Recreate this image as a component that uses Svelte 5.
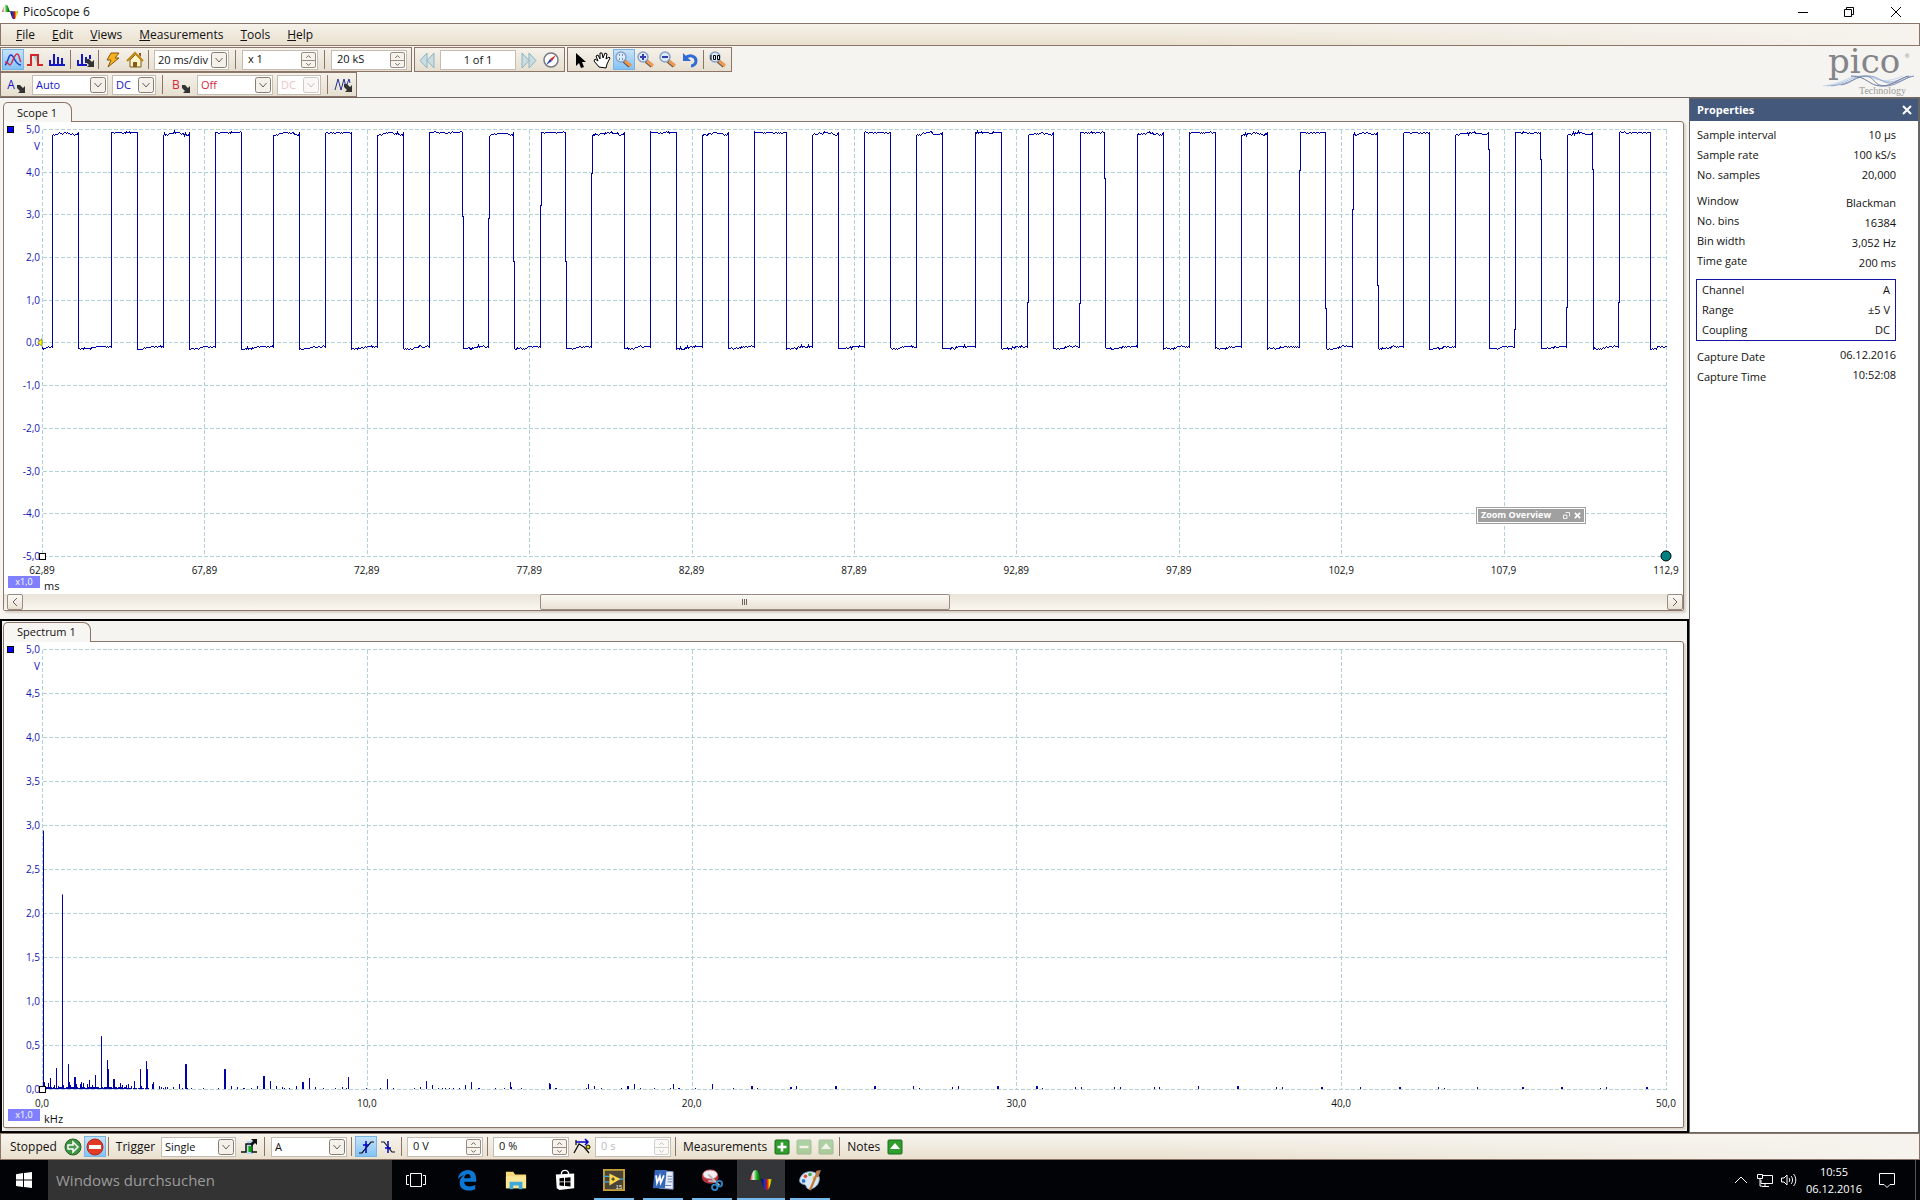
<script>
  const menus = ['File', 'Edit', 'Views', 'Measurements', 'Tools', 'Help'];

  const voltLabels = ['5,0', '4,0', '3,0', '2,0', '1,0', '0,0', '-1,0', '-2,0', '-3,0', '-4,0', '-5,0'];
  const timeLabels = ['62,89', '67,89', '72,89', '77,89', '82,89', '87,89', '92,89', '97,89', '102,9', '107,9', '112,9'];
  const levelLabels = ['5,0', '4,5', '4,0', '3,5', '3,0', '2,5', '2,0', '1,5', '1,0', '0,5', '0,0'];
  const freqLabels = ['0,0', '10,0', '20,0', '30,0', '40,0', '50,0'];

  // Alternating rising and falling edges of the square wave.
  const edges = [
    10, 36, 69, 95, 121, 147, 173, 199, 231, 257, 283, 309, 335, 361, 387, 420, 446, 471, 498, 523, 549, 582,
    608, 634, 660, 686, 712, 744, 770, 796, 822, 848, 874, 900, 933, 959, 985, 1011, 1037, 1062, 1095, 1121,
    1147, 1173, 1199, 1225, 1257, 1283, 1310, 1335, 1361, 1387, 1413, 1446, 1472, 1498, 1524, 1550, 1576, 1608
  ];
  // Height at which an edge steps over by one pixel.
  const kinks = { 15: 87, 16: 89, 17: 131, 18: 76, 19: 131, 20: 44, 36: 172, 38: 173, 39: 49, 46: 41, 47: 178, 48: 80, 49: 155, 53: 20, 54: 199, 55: 30, 56: 177, 57: 40, 58: 172 };

  let seed = 7;
  function rand() {
    seed = (seed * 16807) % 2147483647;
    return seed / 2147483647;
  }

  function level(from, to, high, shape) {
    const out = [];
    const base = high ? 3 : 216;
    for (let x = from; x < to; x += 1) {
      const t = (x - from) / Math.max(1, to - from);
      let drift = 0;
      if (high) drift = shape === 0 ? (t < 0.35 ? 3 - t * 8 : 0) : shape === 1 ? 0 : shape === 2 ? t * 3 : Math.abs(t - 0.5) * 5;
      else drift = t < 0.4 ? 2 : shape === 1 ? 0 : 1 - t;
      const r = rand();
      const n = r > 0.75 ? 1 : r < 0.08 ? -1 : 0;
      out.push(`${x} ${Math.round(base + drift + n)}`);
    }
    return out;
  }

  function wave() {
    let pts = [];
    let from = 0;
    let high = false;
    edges.forEach((x, i) => {
      pts = pts.concat(level(from, x, high, (i * 7) % 4));
      if (kinks[i]) {
        pts.push(`${x} ${high ? 3 : 217}`, `${x} ${kinks[i]}`, `${x + 1} ${kinks[i]}`);
        from = x + 1;
      } else {
        pts.push(`${x} ${high ? 3 : 217}`);
        from = x;
      }
      high = !high;
    });
    return 'M' + pts.concat(level(from, 1625, false, 1)).join('L');
  }
  const wavePath = wave();

  // Spectrum lines: position, height, width.
  const peaks = [
    [1, 259], [2, 7], [6, 6], [8, 11], [12, 4], [14, 21], [16, 3], [20, 195], [21, 4], [26, 25], [27, 7], [28, 4],
    [32, 12, 2], [34, 5], [38, 5], [39, 7], [41, 6], [45, 5], [47, 9], [50, 4], [53, 14], [59, 53], [65, 29], [66, 20],
    [71, 10, 2], [78, 6], [80, 4], [84, 4], [86, 5], [89, 3], [92, 8], [98, 20], [99, 3], [104, 28], [105, 20], [110, 5],
    [111, 7], [117, 3], [119, 2], [123, 2], [125, 2], [131, 2], [137, 5], [143, 25, 2], [149, 1], [176, 1], [182, 20, 2],
    [189, 3], [195, 2], [201, 1], [209, 1], [215, 3], [221, 13, 2], [228, 8], [234, 3], [240, 2], [247, 1], [254, 3],
    [260, 7, 2], [267, 11], [273, 2], [293, 1], [300, 2], [306, 12], [345, 10], [351, 1], [372, 1], [378, 2], [384, 8],
    [390, 4], [396, 1], [403, 1], [411, 1], [423, 4], [429, 7], [436, 1, 2], [462, 1], [468, 7], [469, 2], [507, 6],
    [508, 5], [514, 1], [546, 5], [552, 3], [559, 1], [579, 1], [585, 3, 2], [592, 5], [631, 5], [637, 1], [670, 5], [709, 3, 2],
    [715, 1], [748, 2, 2], [754, 3], [793, 3, 2], [832, 3, 2], [871, 3], [877, 1], [910, 2], [916, 3], [955, 3, 2], [994, 3, 2],
    [1000, 1], [1033, 2], [1039, 2], [1072, 2], [1078, 2], [1112, 2], [1117, 2], [1156, 3], [1195, 3, 2], [1234, 2],
    [1240, 2], [1279, 2, 2], [1318, 2], [1357, 2, 2], [1396, 2], [1402, 1], [1435, 2], [1480, 2, 2], [1519, 2, 2], [1558, 1],
    [1564, 2], [1604, 2, 2]
  ];
  const floor = [];
  for (let x = 3; x < 106; x += 1) floor.push([x, x < 84 ? 1 + Math.round(rand() * 1.4) : Math.round(rand() * 1.5), 1]);
  for (let x = 106; x < 700; x += 5 + Math.round(rand() * 14)) floor.push([x, rand() > 0.5 ? 1 : 0, 1]);
  const bars = [...floor, ...peaks];

  const acquisition = [['Sample interval', '10 µs'], ['Sample rate', '100 kS/s'], ['No. samples', '20,000']];
  const spectrum = [['Window', 'Blackman'], ['No. bins', '16384'], ['Bin width', '3,052 Hz'], ['Time gate', '200 ms']];
  const channel = [['Channel', 'A'], ['Range', '±5 V'], ['Coupling', 'DC']];
  const capture = [['Capture Date', '06.12.2016'], ['Capture Time', '10:52:08']];
</script>

{#snippet combo(label, value, cls, disabled = false)}
  <span class="combo {cls}">
    <select aria-label={label} {disabled}><option>{value}</option></select>
    <svg class="drop" viewBox="0 0 16 16" aria-hidden="true"><rect x=".5" y=".5" width="15" height="15" rx="2" /><path d="M4.500 6l3.500 4 3.500-4" /></svg>
  </span>
{/snippet}

{#snippet spin(label, value, disabled = false)}
  <span class="spin">
    <input type="text" aria-label={label} {value} {disabled} />
    <span class="steps">
      <button aria-label="{label} up" {disabled}><svg viewBox="0 0 15 8"><path d="M5 5.500l2.500-2.500 2.500 2.500" /></svg></button>
      <button aria-label="{label} down" {disabled}><svg viewBox="0 0 15 8"><path d="M5 2.500l2.500 2.500 2.500-2.500" /></svg></button>
    </span>
  </span>
{/snippet}

{#snippet corner()}
  <path d="M11 9h3l3 3 2-2v7h-7l2-2-3-3z" fill="#333" />
{/snippet}

{#snippet lens()}
  <path d="M10 11l6 5" stroke="#555" stroke-width="4" /><path d="M11 11l6 5" stroke="#ee9850" stroke-width="3" />
  <circle cx="7" cy="7" r="5" fill="#d8ecfb" stroke="#8d9fc4" stroke-width="1.500" />
{/snippet}

{#snippet logo()}
  <defs>
    <linearGradient id="rainbow" x1="0" x2="1"><stop offset="0" stop-color="#d22" /><stop offset=".3" stop-color="#eee" /><stop offset=".6" stop-color="#2b2" /><stop offset="1" stop-color="#030" /></linearGradient>
    <linearGradient id="rainbow2" x1="0" x2="1"><stop offset="0" stop-color="#003" /><stop offset=".3" stop-color="#13c" /><stop offset=".55" stop-color="#c11" /><stop offset=".8" stop-color="#fd0" /><stop offset="1" stop-color="#180" /></linearGradient>
  </defs>
  <path d="M0 12C2 5 3 1 6 1s4 5 6 11z" fill="url(#rainbow)" />
  <path d="M12 11h12c-2 7-3 12-6 12s-4-5-6-12z" fill="url(#rainbow2)" />
{/snippet}

{#snippet rows(list, cls)}
  <dl class={cls}>
    {#each list as [name, value]}
      <div class="prop"><dt>{name}</dt><dd>{value}</dd></div>
    {/each}
  </dl>
{/snippet}

{#snippet grid(cols)}
  <g class="gridlines" transform="translate(.5 .5)">
    {#each Array(11) as _, i}
      <line x1="0" x2="100%" y1="{i * 10}%" y2="{i * 10}%" />
    {/each}
    {#each Array(cols + 1) as _, i}
      <line y1="0" y2="100%" x1="{(i * 100) / cols}%" x2="{(i * 100) / cols}%" />
    {/each}
  </g>
{/snippet}

<div class="screen">
  <header class="title">
    <svg class="app-icon" viewBox="0 0 24 24">{@render logo()}</svg>
    <h1>PicoScope 6</h1>
    <button class="win" aria-label="Minimize"><svg viewBox="0 0 10 10"><path d="M0 5.500h10" /></svg></button>
    <button class="win" aria-label="Restore"><svg viewBox="0 0 10 10"><path d="M.5 2.500h7v7h-7zM2.500 2.500v-2h7v7h-2" /></svg></button>
    <button class="win" aria-label="Close"><svg viewBox="0 0 10 10"><path d="M0 0l10 10M10 0L0 10" /></svg></button>
  </header>

  <nav class="menu">
    {#each menus as item}
      <button><u>{item[0]}</u>{item.slice(1)}</button>
    {/each}
  </nav>

  <div class="tools">
    <div class="bars">
      <div class="bar-row">
        <div class="bar">
          <button class="tool on" aria-label="Scope mode"><svg viewBox="0 0 20 20"><path d="M2 15C5 14 5 5 8 5s4 10 10 10" stroke="#2238c8" stroke-width="1.500" fill="none" /><path d="M2 12c4 0 3 3 5 3s4-11 7-11 2 6 4 8" stroke="#d0324a" stroke-width="1.500" fill="none" /></svg></button>
          <button class="tool" aria-label="Persistence mode"><svg viewBox="0 0 20 20"><path d="M8 5h5v10z" fill="#9cc" /><path d="M2 15h4V5h7v10h5" stroke="#d3272f" stroke-width="2" fill="none" /></svg></button>
          <button class="tool" aria-label="Spectrum mode"><svg viewBox="0 0 20 20"><path d="M3 15V10M7 15V4M11 15V7M15 15V8M2 15h16" stroke="#1418c4" stroke-width="2" /></svg></button>
          <i class="sep"></i>
          <button class="tool" aria-label="Spectrum options"><svg viewBox="0 0 20 20"><path d="M3 15V10M7 15V4M11 13V7M15 9V5M2 15h10" stroke="#1418c4" stroke-width="2" />{@render corner()}</svg></button>
          <i class="sep"></i>
          <button class="tool" aria-label="Auto setup"><svg viewBox="0 0 20 20"><path d="M8 3h8l-4 5h4L5 17l3-7H4z" fill="#f6b21c" stroke="#8a5510" /></svg></button>
          <button class="tool" aria-label="Home"><svg viewBox="0 0 20 20"><path d="M5 10v7h11v-7l-5-6z" fill="#fff3c8" stroke="#7d5a1c" /><path d="M2 11l8-8 8 8" fill="none" stroke="#bf8410" stroke-width="2" /><path d="M14 3h2v4l-2-2zM8 12h4v5H8z" fill="#8a5a14" /></svg></button>
          <i class="sep"></i>
          {@render combo('Collection time', '20 ms/div', 'w75')}
          <i class="sep wide"></i>
          {@render spin('Zoom factor', 'x 1')}
          <i class="sep wide"></i>
          {@render spin('Samples', '20 kS')}
        </div>
        <div class="bar">
          <button class="tool" aria-label="Previous buffer"><svg viewBox="0 0 20 20"><path d="M10 3v15l-7-7.500zM17 3v15l-7-7.500z" fill="#c9dde3" stroke="#8fb4c2" /></svg></button>
          <input class="buffer" aria-label="Buffer" value="1 of 1" />
          <button class="tool" aria-label="Next buffer"><svg viewBox="0 0 20 20"><path d="M3 3v15l7-7.500zM10 3v15l7-7.500z" fill="#c9dde3" stroke="#8fb4c2" /></svg></button>
          <button class="tool" aria-label="Navigator"><svg viewBox="0 0 20 20"><circle cx="10" cy="10" r="7" fill="#fff" stroke="#778" stroke-width="1.500" /><path d="M15 5l-4 6-2-2z" fill="#d22" /><path d="M5 15l4-6 2 2z" fill="#24a" /></svg></button>
        </div>
        <div class="bar">
          <button class="tool" aria-label="Select"><svg viewBox="0 0 20 20"><path d="M6 3v13l3-3 2 5 3-1-2-5h4z" fill="#000" /></svg></button>
          <button class="tool" aria-label="Hand"><svg viewBox="0 0 20 20"><path d="M7 17l-5-6 1-2 3 2-2-5 2-1 2 4V3h2l1 5 2-5 2 1-1 5 3-2 1 1-3 6-1 4z" fill="#fff" stroke="#000" /></svg></button>
          <button class="tool on" aria-label="Marquee zoom"><svg viewBox="0 0 20 20">{@render lens()}<path d="M5 5h1M8 5h1M5 9h1M8 9h1" stroke="#235" /></svg></button>
          <button class="tool" aria-label="Zoom in"><svg viewBox="0 0 20 20">{@render lens()}<path d="M4 7h6M7 4v6" stroke="#3b3bb0" stroke-width="2" /></svg></button>
          <button class="tool" aria-label="Zoom out"><svg viewBox="0 0 20 20">{@render lens()}<path d="M4 7h6" stroke="#3b3bb0" stroke-width="2" /></svg></button>
          <button class="tool" aria-label="Undo zoom"><svg viewBox="0 0 20 20"><path d="M5 8c5-4 11-2 11 3 0 3-3 5-5 5" fill="none" stroke="#2f6bd8" stroke-width="3" /><path d="M3 3v8h8z" fill="#2f6bd8" /></svg></button>
          <i class="sep"></i>
          <button class="tool" aria-label="Full view"><svg viewBox="0 0 20 20">{@render lens()}<path d="M3 5v5M5.500 5.500h2v4h-2zM9.500 5.500h2v4h-2z" fill="none" stroke="#000" /></svg></button>
        </div>
      </div>
      <div class="bar-row">
        <div class="bar">
          <button class="tool ch blue" aria-label="Channel A options"><span>A</span><svg class="mini" viewBox="11 9 8 8">{@render corner()}</svg></button>
          {@render combo('Channel A range', 'Auto', 'w76 blue')}
          {@render combo('Channel A coupling', 'DC', 'w44 blue')}
          <i class="sep wide"></i>
          <button class="tool ch red" aria-label="Channel B options"><span>B</span><svg class="mini" viewBox="11 9 8 8">{@render corner()}</svg></button>
          {@render combo('Channel B range', 'Off', 'w76 red')}
          {@render combo('Channel B coupling', 'DC', 'w44 red', true)}
          <i class="sep wide"></i>
          <button class="tool" aria-label="Maths channels"><svg viewBox="0 0 20 20"><path d="M2 15L5 4l3 11 3-11 2 8 3-8 1 4" fill="none" stroke="#23309a" />{@render corner()}</svg></button>
        </div>
      </div>
    </div>
    <svg class="brand" viewBox="0 0 96 46" role="img" aria-label="pico Technology">
      <text x="7" y="24" font-family="DejaVu Serif, serif" font-size="34" fill="#84858a">pico</text>
      <text x="84" y="9" font-family="Liberation Sans, sans-serif" font-size="6" fill="#84858a">®</text>
      <g fill="none" stroke-width="1">
        <path d="M2 37C22 35 26 27 40 27s20 10 42 0" stroke="#c6d8ee" />
        <path d="M6 37C26 35 30 27 44 27s20 13 42 0" stroke="#aec4e2" />
        <path d="M10 37C30 35 34 27 48 27s14 16 42 0" stroke="#93a9cd" />
        <path d="M20 36c12-2 14-9 24-9s8 10 20 10 18-8 29-10" stroke="#7d8eb2" />
        <path d="M30 27c16 0 18 10 30 10s16-7 28-10" stroke="#6d7a9c" />
      </g>
      <text x="38" y="45" font-family="Liberation Serif, serif" font-size="10" fill="#9a9a9a">Technology</text>
    </svg>
  </div>

  <main class="work">
    <div class="views">
      <section class="view scope">
        <button class="tab">Scope 1</button>
        <div class="body">
          <div class="plot">
            <div class="axis">
              <i class="flag"></i>
              <ul>{#each voltLabels as l}<li>{l}</li>{/each}</ul>
              <b class="unit">V</b>
            </div>
            <div class="canvas">
              <svg class="chart">
                {@render grid(10)}
                <svg viewBox="0 0 1624 425" preserveAspectRatio="none" width="100%" height="100%">
                  <path class="trace" d={wavePath} />
                </svg>
                <svg x="0" y="50%" overflow="visible"><path d="M-4 0l4-4v8z" fill="#ff0" stroke="#330" stroke-width=".5" /></svg>
                <svg x="0" y="100%" overflow="visible"><rect x="-2.500" y="-2.500" width="6" height="6" fill="#fff" stroke="#000" /></svg>
                <circle cx="100%" cy="100%" r="5" fill="#008080" stroke="#000" />
              </svg>
              <div class="float">
                <span>Zoom Overview</span>
                <button aria-label="Restore overview"><svg viewBox="0 0 8 8"><path d="M.5 3.500h4v4h-4zM3 .5h4.500V5" /></svg></button>
                <button aria-label="Close overview"><svg class="bold" viewBox="0 0 8 8"><path d="M1 1l6 6M7 1L1 7" /></svg></button>
              </div>
            </div>
          </div>
          <div class="foot">
            <span class="scale">x1,0</span>
            <div class="ticks">
              <ul>{#each timeLabels as l}<li>{l}</li>{/each}</ul>
              <span>ms</span>
            </div>
          </div>
          <div class="scroll">
            <button aria-label="Scroll left"><svg viewBox="0 0 8 8"><path d="M6 0L2 4l4 4" /></svg></button>
            <i class="before"></i>
            <button class="thumb" aria-label="Scroll position"><svg viewBox="0 0 8 8"><path d="M1.500 1v6M3.500 1v6M5.500 1v6" /></svg></button>
            <i class="after"></i>
            <button aria-label="Scroll right"><svg viewBox="0 0 8 8"><path d="M2 0l4 4-4 4" /></svg></button>
          </div>
        </div>
      </section>

      <section class="view spec">
        <button class="tab">Spectrum 1</button>
        <div class="body">
          <div class="plot">
            <div class="axis">
              <i class="flag"></i>
              <ul>{#each levelLabels as l}<li>{l}</li>{/each}</ul>
              <b class="unit">V</b>
            </div>
            <div class="canvas">
              <svg class="chart">
                {@render grid(5)}
                <svg viewBox="0 0 1624 441" preserveAspectRatio="none" width="100%" height="100%">
                  {#each bars as [x, h, w = 1]}
                    <rect {x} y={441 - h} width={w} height={h} fill="#0000a8" />
                  {/each}
                </svg>
                <svg x="0" y="100%" overflow="visible"><rect x="-2.500" y="-2.500" width="6" height="6" fill="#fff" stroke="#000" /></svg>
              </svg>
            </div>
          </div>
          <div class="foot">
            <span class="scale">x1,0</span>
            <div class="ticks">
              <ul>{#each freqLabels as l}<li>{l}</li>{/each}</ul>
              <span>kHz</span>
            </div>
          </div>
        </div>
      </section>
    </div>

    <aside class="props">
      <header><h2>Properties</h2><button aria-label="Close properties"><svg viewBox="0 0 10 10"><path d="M1 1l8 8M9 1L1 9" /></svg></button></header>
      {@render rows(acquisition, 'group')}
      {@render rows(spectrum, 'group low')}
      {@render rows(channel, 'group framed')}
      {@render rows(capture, 'group high')}
    </aside>
  </main>

  <footer class="status">
    <span class="label first">Stopped</span>
    <button class="tool" aria-label="Start"><svg viewBox="0 0 20 20"><circle cx="10" cy="10" r="8" fill="#3d9440" stroke="#246028" /><path d="M5 8h5V5l5 5-5 5v-3H5z" fill="#4a9c4c" stroke="#fff" stroke-width="1.500" /></svg></button>
    <button class="tool on" aria-label="Stop"><svg viewBox="0 0 20 20"><circle cx="10" cy="10" r="8" fill="#e23a24" stroke="#b02818" /><path d="M4 8h12v4H4z" fill="#fff" /></svg></button>
    <i class="sep"></i>
    <span class="label">Trigger</span>
    {@render combo('Trigger mode', 'Single', 'w75')}
    <button class="tool" aria-label="Trigger options"><svg viewBox="0 0 20 20"><path d="M8 4h6v13H8z" fill="#b5d8f2" /><path d="M2 15h5V7h6v8h5" fill="none" stroke="#111" stroke-width="1.500" /><path d="M12 2h6v6l-2-2-3 3-2-2 3-3z" fill="#111" /><path d="M11 9v6" stroke="#0a0" stroke-width="3" /></svg></button>
    <i class="sep wide"></i>
    {@render combo('Trigger source', 'A', 'w76')}
    <i class="sep"></i>
    <button class="tool on" aria-label="Rising edge"><svg viewBox="0 0 20 20"><path d="M3 16h3l9-11h3" fill="none" stroke="#111" stroke-width="1.200" /><path d="M10 4v12M7 8h6" stroke="#00c" stroke-width="1.500" /></svg></button>
    <button class="tool" aria-label="Falling edge"><svg viewBox="0 0 20 20"><path d="M3 5h3l8 10h3" fill="none" stroke="#111" stroke-width="1.200" /><path d="M10 4v12M7 11h6" stroke="#00c" stroke-width="1.500" /></svg></button>
    <i class="sep"></i>
    {@render spin('Threshold', '0 V')}
    <i class="sep"></i>
    {@render spin('Pre-trigger', '0 %')}
    <button class="tool" aria-label="Post-trigger delay"><svg viewBox="0 0 20 20"><path d="M2 16L7 7l5 3 5 6M4 3v5" fill="none" stroke="#111" stroke-width="1.300" /><path d="M4 5h12M13 2l3 3-3 3" fill="none" stroke="#00c" stroke-width="1.500" /><circle cx="16" cy="10" r="2" fill="#dc0" stroke="#111" /></svg></button>
    {@render spin('Delay', '0 s', true)}
    <i class="sep"></i>
    <span class="label">Measurements</span>
    <button class="tool" aria-label="Add measurement"><svg viewBox="0 0 20 20"><rect x="3" y="3" width="14" height="14" rx="1" fill="#2f9e2f" stroke="#1c6c1c" /><path d="M5.500 10h9M10 5.500v9" stroke="#fff" stroke-width="2.500" /></svg></button>
    <button class="tool" aria-label="Remove measurement" disabled><svg viewBox="0 0 20 20"><rect x="3" y="3" width="14" height="14" rx="1" fill="#2f9e2f" stroke="#1c6c1c" /><path d="M5.500 10h9" stroke="#fff" stroke-width="2.500" /></svg></button>
    <button class="tool" aria-label="Edit measurement" disabled><svg viewBox="0 0 20 20"><rect x="3" y="3" width="14" height="14" rx="1" fill="#2f9e2f" stroke="#1c6c1c" /><path d="M5 12l5-6 5 6z" fill="#fff" /></svg></button>
    <i class="sep"></i>
    <span class="label">Notes</span>
    <button class="tool" aria-label="Open notes"><svg viewBox="0 0 20 20"><rect x="3" y="3" width="14" height="14" rx="1" fill="#2f9e2f" stroke="#1c6c1c" /><path d="M5 12l5-6 5 6z" fill="#fff" /></svg></button>
  </footer>

  <footer class="taskbar">
    <button class="task start" aria-label="Start menu"><svg viewBox="0 0 16 16"><path d="M0 2.200L7 1v6.500H0zM8 1l8-1v7.500H8zM0 8.500h7V15l-7-1zM8 8.500h8V16l-8-1z" fill="#fff" /></svg></button>
    <input class="search" aria-label="Search" placeholder="Windows durchsuchen" />
    <button class="task view-btn" aria-label="Task view"><svg viewBox="0 0 20 20"><path d="M4.500 3.500h11v13h-11zM3 5.500H.5v9H3M17 5.500h2.500v9H17" fill="none" stroke="#fff" /></svg></button>
    <button class="task" aria-label="Edge"><svg class="big" viewBox="0 0 24 24"><path d="M2 11C3 5 7 1 13 1c6 0 9 4 9 10v3H9c0 4 3 5 6 5 2 0 4-.5 6-1.500v4.500c-2 1-4 1.500-7 1.500-6 0-10-3-10-8.500C4 11 6 8 9 7c-3 0-5 2-7 4zM9 10h7c0-3-1-4.500-3.500-4.500C10 5.500 9 8 9 10z" fill="#0b78d6" /></svg></button>
    <button class="task" aria-label="Explorer"><svg class="big" viewBox="0 0 24 24"><path d="M1 3h8l2 3h12v15H1z" fill="#f6d77a" /><path d="M1 8h22v13H1z" fill="#fbe596" /><path d="M5 22v-8h14v8h-4v-4H9v4z" fill="#3fa9d8" /></svg></button>
    <button class="task" aria-label="Store"><svg class="big" viewBox="0 0 24 24"><path d="M8 6c0-6 8-6 8 0" fill="none" stroke="#fff" stroke-width="1.500" /><path d="M2 6l20-1v16l-16 2-3-2z" fill="#fff" /><path d="M6 10l5-.5v4H6zM12 9.500l6-.5v4.500h-6zM6 14.500h5v4l-5-.5zM12 14.500h6v4.500l-6-.5z" fill="#000" /></svg></button>
    <button class="task open" aria-label="LabVIEW"><svg class="big" viewBox="0 0 24 24"><path d="M1 1h22v22H1z" fill="#4b4436" stroke="#c9a33a" stroke-width="2" /><path d="M0 8h8M0 14h8M16 11h8" stroke="#4aa3d8" stroke-width="1.500" /><path d="M7 5l12 6-12 7z" fill="#ffd54a" /><path d="M9 11h4M11 9v4" stroke="#222" /><text x="14" y="22" font-size="6" font-family="Liberation Sans, sans-serif" fill="#fff">15</text></svg></button>
    <button class="task open" aria-label="Word"><svg class="big" viewBox="0 0 24 24"><path d="M8 2l15 1v19l-15-1z" fill="#e8eef8" stroke="#7f9dcf" /><path d="M17 8h5M17 11h5M17 14h5M10 18h11" stroke="#5e7fbd" /><path d="M3 1h13l-2 20H1z" fill="#3767b8" /><path d="M4.500 7l1 8 3-7 1 7L13 7" fill="none" stroke="#fff" stroke-width="2" /></svg></button>
    <button class="task open" aria-label="Snipping tool"><svg class="big" viewBox="0 0 24 24"><ellipse cx="10" cy="9" rx="9" ry="7" fill="#b5313f" /><ellipse cx="10" cy="6" rx="8" ry="5" fill="#f5eef0" stroke="#d3606c" /><path d="M8 6l12 12M8 13l9 1" stroke="#bbb" stroke-width="2" /><circle cx="15" cy="20" r="3" fill="none" stroke="#2d86c4" stroke-width="2" /><circle cx="20" cy="16" r="3" fill="none" stroke="#2d86c4" stroke-width="2" /></svg></button>
    <button class="task open current" aria-label="PicoScope"><svg class="big" viewBox="0 0 24 24">{@render logo()}</svg></button>
    <button class="task open" aria-label="Paint"><svg class="big" viewBox="0 0 24 24"><path d="M12 3c7 0 11 4 10 9-1 6-5 9-10 10-5 0-3-4-6-5-4-1-6-2-5-6s5-8 11-8z" fill="#d9e9f5" stroke="#8fb4d4" /><circle cx="7" cy="8" r="2" fill="#e24b3b" /><circle cx="12" cy="6" r="2" fill="#48a84a" /><circle cx="5" cy="13" r="2" fill="#2f72c8" /><circle cx="17" cy="10" r="2" fill="#e9b53a" /><path d="M12 23l6-14" stroke="#c27a35" stroke-width="2.500" /><path d="M17 9l2-7 5-1-3 8z" fill="#b87a4a" /></svg></button>
    <div class="tray">
      <button aria-label="Hidden icons"><svg viewBox="0 0 16 16"><path d="M2 11l6-6 6 6" /></svg></button>
      <button aria-label="Network"><svg viewBox="0 0 16 16"><path d="M6 3.500h9.500v8H4V8M8 12v2.500M5 14.500h7M.5 2.500h5v4h-5zM3 7v7h2" /></svg></button>
      <button aria-label="Volume"><svg viewBox="0 0 16 16"><path d="M.5 6h2.500l3-3v10L3 10H.5zM8 6c1 1 1 3 0 4M10 4c2 2 2 6 0 8M12.500 2c3 3 3 9 0 12" /></svg></button>
      <time><span>10:55</span><span>06.12.2016</span></time>
      <button aria-label="Notifications"><svg viewBox="0 0 16 16"><path d="M.5 1.500h15v11H11l-3 3-3-3H.5z" /></svg></button>
      <i class="peek"></i>
    </div>
  </footer>
</div>

<style>
  :global(body) { margin: 0; }
  .screen {
    display: flex;
    flex-direction: column;
    min-height: 100vh;
    background: #f6f4f1;
    color: #111;
    font-family: "Open Sans", "Noto Sans", sans-serif;
    font-size: 11px;
    line-height: 16px;
  }
  .screen :is(h1, h2, ul, dl, dd) { margin: 0; padding: 0; list-style: none; font-weight: normal; }
  button, input, select { font: inherit; color: inherit; margin: 0; padding: 0; border: 0; background: none; border-radius: 0; }
  svg { display: block; }

  .title { display: flex; align-items: center; height: 23px; padding-left: 2px; background: #fff; }
  .app-icon { width: 16px; height: 16px; margin-right: 5px; }
  .title h1 { flex: 1; font-size: 12px; line-height: 20px; }
  .win { display: grid; place-items: center; width: 46px; height: 20px; }
  .win:last-child { width: 48px; }
  .win svg { width: 10px; height: 10px; fill: none; stroke: #000; }

  .menu { display: flex; align-items: center; gap: 17px; height: 21px; padding-left: 15px; border: 1px solid #8b7468; background: linear-gradient(90deg, transparent 60%, #f6f3ee), linear-gradient(#f6f2ea, #e9e0ce); }
  .menu button { padding-top: 1px; font-size: 12px; line-height: 18px; }

  .tools { display: flex; justify-content: space-between; padding-top: 1px; border-bottom: 1px solid #6d6866; }
  .bars { display: flex; flex-direction: column; }
  .bar-row { display: flex; gap: 2px; }
  .bar { display: flex; align-items: center; height: 23px; padding: 0 2px 0 1px; border: 1px solid #8b7468; background: linear-gradient(#f6f2ea, #e6dfd0); }
  .brand { width: 96px; height: 46px; margin: 2px 3px 0 0; overflow: visible; }
  .tool { display: grid; place-items: center; box-sizing: border-box; width: 22px; height: 21px; flex: none; }
  .tool svg { width: 20px; height: 20px; fill: none; }
  .tool:disabled svg { opacity: .35; }
  .on { border: 1px solid #79b4e4; background: linear-gradient(#c6e2fa, #84c2f6); }
  .sep { flex: none; width: 1px; height: 19px; margin: 0 3px 0 2px; background: #8b7468; }
  .sep.wide { margin: 0 4px; }
  .ch { display: flex; align-items: center; gap: 2px; width: 28px; justify-content: center; font-size: 12px; }
  .ch .mini { width: 8px; height: 8px; margin-top: 8px; }
  .blue { color: #1414c8; }
  .red { color: #d8283c; }

  .combo { display: grid; box-sizing: border-box; height: 20px; border: 1px solid #c3bdb4; background: #fff; margin: 0 2px; }
  .combo select { grid-area: 1 / 1; appearance: none; width: 100%; padding-left: 3px; outline: 0; font-size: 11px; opacity: 1; }
  .combo select:disabled { opacity: .3; color: inherit; }
  .drop { grid-area: 1 / 1; justify-self: end; align-self: center; width: 16px; height: 16px; margin-right: 1px; pointer-events: none; }
  .drop rect { fill: #f4f0ea; stroke: #8b7c72; }
  .drop path { fill: none; stroke: #6d625b; }
  .combo select:disabled + .drop { opacity: .4; }
  .w75 { width: 75px; }
  .w76 { width: 76px; }
  .w44 { width: 44px; }
  .spin { display: flex; align-items: center; box-sizing: border-box; width: 76px; height: 20px; margin: 0 2px; padding-right: 1px; border: 1px solid #c3bdb4; background: #fff; }
  .spin input { flex: 1; min-width: 0; height: 18px; padding: 0 0 2px 5px; box-sizing: border-box; }
  .spin input:disabled { color: #bbb; }
  .steps { display: grid; gap: 0; box-sizing: border-box; width: 15px; height: 16px; border: 1px solid #9a8c82; border-radius: 2px; background: #f6f2ec; }
  .steps button { height: 7px; }
  .steps button + button { border-top: 1px solid #9a8c82; }
  .steps svg { width: 13px; height: 7px; fill: none; stroke: #5f544d; }
  .steps:has(:disabled) { opacity: .4; }
  .buffer { box-sizing: border-box; width: 76px; height: 20px; margin: 0 2px; border: 1px solid #c3bdb4; background: #fff; text-align: center; }

  .work { display: flex; flex: 1; min-height: 0; }
  .views { display: flex; flex-direction: column; flex: 1; min-width: 0; }
  .view { display: flex; flex-direction: column; align-items: flex-start; box-sizing: border-box; }
  .scope { flex: 519 1 0; padding: 4px 5px 8px 3px; }
  .spec { flex: 516 1 0; padding: 1px 3px 3px 1px; border: 2px solid #000; }
  .tab { flex: none; height: 20px; min-width: 67px; padding: 0 14px 0 13px; margin-bottom: -1px; border: 1px solid #8b7468; border-bottom: 0; border-radius: 5px 8px 0 0; background: #f8f6f3; z-index: 1; }
  .body { display: flex; flex-direction: column; align-self: stretch; flex: 1; min-height: 0; border: 1px solid #8b7468; border-radius: 0 3px 2px 2px; background: #fff; box-shadow: 2px 2px 2px #d9d2c8; }
  .plot { display: flex; flex: 1; min-height: 0; padding: 7px 17px 0 0; }
  .axis { position: relative; width: 38px; color: #1414b4; }
  .axis ul, .axis { display: flex; flex-direction: column; }
  .axis ul { flex: 1; justify-content: space-between; }
  .axis li { height: 0; line-height: 0; padding-right: 2px; text-align: right; font-size: 10px; }
  .flag { position: absolute; left: 3px; top: -3px; width: 5px; height: 5px; border: 1px solid #000; background: #00f; }
  .unit { position: absolute; right: 2px; top: 9px; font-weight: normal; font-size: 10px; }
  .canvas { position: relative; flex: 1; min-width: 0; }
  .chart { position: absolute; width: 100%; height: 100%; overflow: visible; }
  .chart svg { overflow: visible; }
  .gridlines line { stroke: #b0d3d9; stroke-dasharray: 4 2; shape-rendering: crispEdges; }
  .trace { fill: none; stroke: #0000a8; vector-effect: non-scaling-stroke; shape-rendering: crispEdges; transform: translate(.5px, .5px); }
  .float { position: absolute; right: 80px; bottom: 32px; display: flex; align-items: center; gap: 4px; box-sizing: border-box; width: 110px; height: 17px; padding: 0 4px; border: 1px solid #a0a0a0; outline: 1px solid #fff; outline-offset: -2px; background: #a0a0a0; color: #fff; font-weight: bold; font-size: 9px; }
  .float span { flex: 1; white-space: nowrap; }
  .float svg { width: 7px; height: 7px; fill: none; stroke: #fff; }
  .float .bold { stroke-width: 2; }
  .foot { display: flex; height: 38px; padding-right: 17px; }
  .scale { box-sizing: border-box; width: 32px; height: 12px; margin: 20px 2px 0 4px; background: #8080ff; color: #fff; font-size: 9px; line-height: 12px; text-align: center; }
  .ticks { flex: 1; min-width: 0; font-size: 10px; }
  .ticks ul { display: flex; justify-content: space-between; height: 22px; padding-top: 6px; box-sizing: border-box; }
  .ticks li { display: flex; justify-content: center; width: 0; }
  .ticks span { display: block; padding-left: 2px; font-size: 11px; }
  .scroll { display: flex; height: 16px; padding-left: 3px; background: linear-gradient(#e9e3d8, #faf7f0); }
  .scroll button { display: grid; place-items: center; box-sizing: border-box; width: 16px; border: 1px solid #9a8c82; border-radius: 2px; background: linear-gradient(#fbf9f6, #e9e1d3); }
  .scroll svg { width: 8px; height: 8px; fill: none; stroke: #6d625b; }
  .scroll .before { flex: 518 1 0; }
  .scroll .thumb { flex: 408 1 0; }
  .scroll .after { flex: 718 1 0; }

  .props { box-sizing: border-box; width: 231px; border: 1px solid #666; border-right-width: 2px; background: #fff; }
  .props header { display: flex; align-items: center; justify-content: space-between; height: 22px; padding: 0 6px 0 7px; background: #44587c; color: #fff; }
  .props h2 { font-size: 11px; font-weight: bold; }
  .props header svg { width: 10px; height: 10px; fill: none; stroke: #fff; stroke-width: 2; }
  .props .group { margin: 4px 22px 0 7px; }
  .props .group.low { margin-top: 6px; }
  .prop { display: flex; justify-content: space-between; height: 20px; line-height: 20px; }
  .low dd { line-height: 24px; }
  .high dd { line-height: 16px; }
  .props .framed { margin: 8px 22px 0 6px; padding: 0 5px; border: 1px solid #1414a0; }
  .props .group.high { margin-top: 6px; }

  .status { display: flex; align-items: center; box-sizing: border-box; height: 27px; border: 1px solid #8b7468; background: linear-gradient(90deg, transparent 60%, #f6f3ee), linear-gradient(#f8f5ef, #e9e0ce); }
  .status { font-size: 12px; }
  .status :is(input, select) { font-size: 11px; }
  .label { padding: 0 4px; white-space: nowrap; }
  .first { padding: 0 5px 0 9px; }

  .taskbar { display: flex; height: 40px; background: #020307; color: #fff; }
  .task { display: grid; place-items: center; flex: none; width: 48px; margin-right: 1px; }
  .start { margin: 0; }
  .view-btn { margin-right: 3px; }
  .task svg { width: 20px; height: 20px; }
  .start svg { width: 16px; height: 16px; }
  .task .big { width: 22px; height: 22px; }
  .open { background: linear-gradient(#76b9ed, #76b9ed) center bottom / 40px 2px no-repeat; }
  .current { background: linear-gradient(#76b9ed, #76b9ed) center bottom / 48px 2px no-repeat #333538; }
  .search { box-sizing: border-box; width: 344px; padding-left: 8px; background: #333; font-size: 15px; }
  .search::placeholder { color: #9b9b9b; opacity: 1; }
  .tray { display: flex; align-items: center; margin-left: auto; }
  .tray button { display: grid; place-items: center; width: 24px; height: 40px; }
  .tray svg { width: 16px; height: 16px; fill: none; stroke: #fff; }
  .tray time { display: grid; width: 66px; text-align: center; line-height: 17px; }
  .tray time + button { width: 40px; }
  .peek { align-self: stretch; width: 4px; margin-left: 8px; border-left: 1px solid #555; }
</style>
